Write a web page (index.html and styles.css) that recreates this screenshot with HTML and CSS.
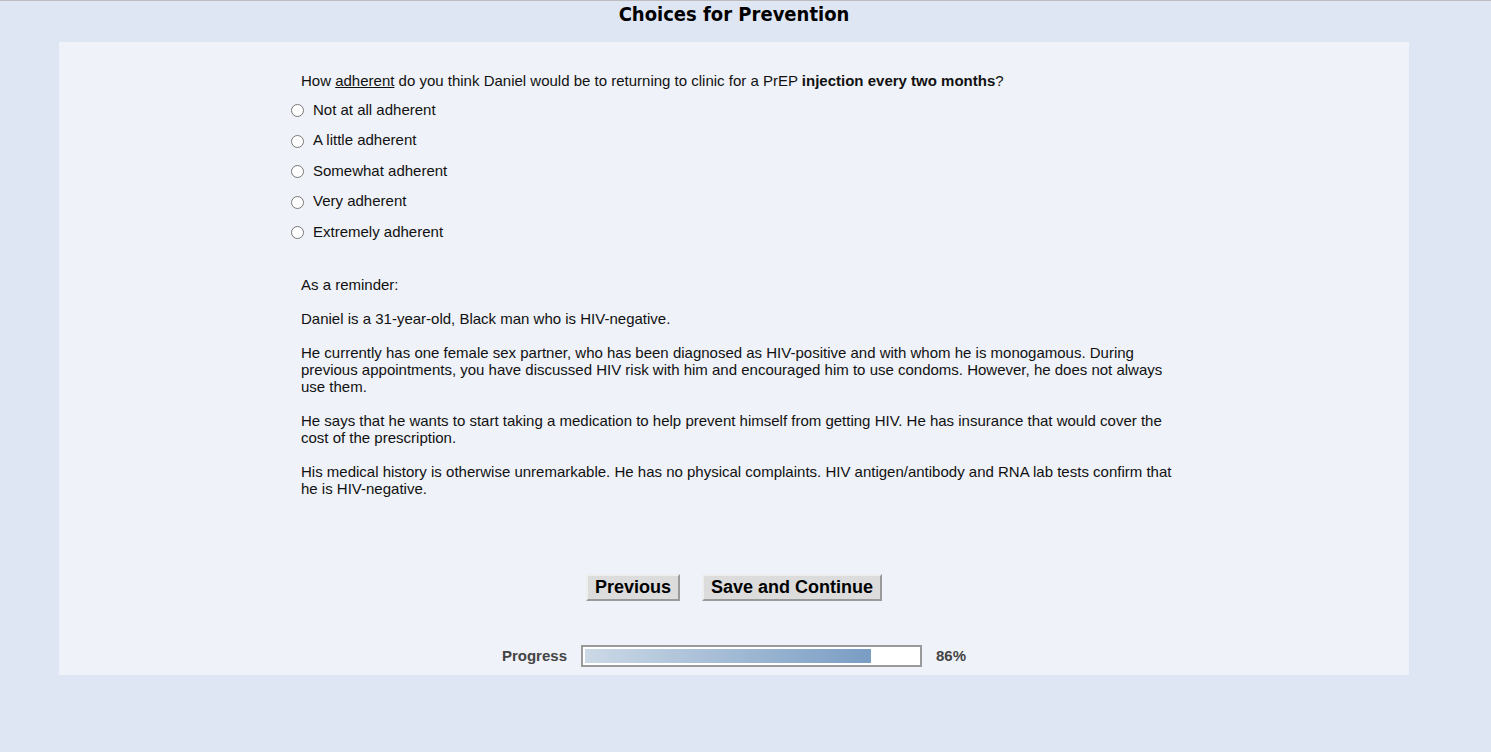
FILE: index.html
```html
<!DOCTYPE html>
<html lang="en">
<head>
    <meta charset="UTF-8">
    <meta name="viewport" content="width=device-width, initial-scale=1.0">
    <title>Choices for Prevention</title>
    <link rel="stylesheet" href="styles.css">
</head>
<body>
    <div class="wrap">
        <h1 class="page-title">Choices for Prevention</h1>
        <div class="panel">
            <div class="survey">
                <p class="question">How <u>adherent</u> do you think Daniel would be to returning to clinic for a PrEP <b>injection every two months</b>?</p>
                <div class="choices">
                    <label class="choice"><input type="radio" name="adh" value="1">Not at all adherent</label>
                    <label class="choice"><input type="radio" name="adh" value="2">A little adherent</label>
                    <label class="choice"><input type="radio" name="adh" value="3">Somewhat adherent</label>
                    <label class="choice"><input type="radio" name="adh" value="4">Very adherent</label>
                    <label class="choice"><input type="radio" name="adh" value="5">Extremely adherent</label>
                </div>
                <div class="reminder">
                    <p>As a reminder:</p>
                    <p>Daniel is a 31-year-old, Black man who is HIV-negative.</p>
                    <p>He currently has one female sex partner, who has been diagnosed as HIV-positive and with whom he is monogamous. During previous appointments, you have discussed HIV risk with him and encouraged him to use condoms. However, he does not always use them.</p>
                    <p>He says that he wants to start taking a medication to help prevent himself from getting HIV. He has insurance that would cover the cost of the prescription.</p>
                    <p>His medical history is otherwise unremarkable. He has no physical complaints. HIV antigen/antibody and RNA lab tests confirm that he is HIV-negative.</p>
                </div>
            </div>
            <div class="nav">
                <button type="button" class="btn">Previous</button>
                <button type="button" class="btn">Save and Continue</button>
            </div>
            <div class="progress">
                <span class="progress-label">Progress</span>
                <div class="progress-track"><div class="progress-fill" style="width: 86%"></div></div>
                <span class="progress-pct">86%</span>
            </div>
        </div>
    </div>
</body>
</html>
```

FILE: styles.css
```css
html{background: #dfe6f3;}
body{margin: 0; border-top: 1px solid #bcbcbc; font-family: "Liberation Sans", Arial, sans-serif; font-size: 15px; color: #111;}
.wrap{margin: 0 82px 0 59px;}
.page-title{margin: 0; height: 41px; padding-top: 1px; box-sizing: border-box; text-align: center; font-family: "DejaVu Sans Condensed", "DejaVu Sans", sans-serif; font-size: 20px; font-weight: bold; color: #000;}
.panel{background: #eff2f8; padding: 30px 0 0;}
.survey{width: 890px; margin: 0 auto; padding-left: 4px;}
.question{margin: 0 0 5px 10px; line-height: 17px;}
.choices{display: flex; flex-direction: column;}
.choice{display: flex; align-items: center; height: 30.5px;}
.choice input{margin: 3px 9px 0 0; width: 13px; height: 13px;}
.reminder{padding: 29px 10px 0; width: 880px;}
.reminder p{margin: 0 0 17px; line-height: 17px;}
.nav{display: flex; justify-content: center; gap: 22px; margin-top: 77px;}
.btn{font-family: "Liberation Sans", Arial, sans-serif; font-size: 18px; font-weight: bold; line-height: 21px; padding: 1px 7px 1px; background: #dcdcdc; border: 2px solid; border-color: #eeeeee #9a9a9a #9a9a9a #eeeeee; color: #000;}
.progress{display: flex; align-items: center; justify-content: center; gap: 14px; padding: 44px 0 8px; font-size: 15px; font-weight: bold; color: #444;}
.progress-track{width: 333px; height: 14px; border: 2px solid #999; background: #fff; padding: 2px;}
.progress-fill{height: 100%; background: linear-gradient(to right, #ccd9e6, #7a9dc4);}
```
